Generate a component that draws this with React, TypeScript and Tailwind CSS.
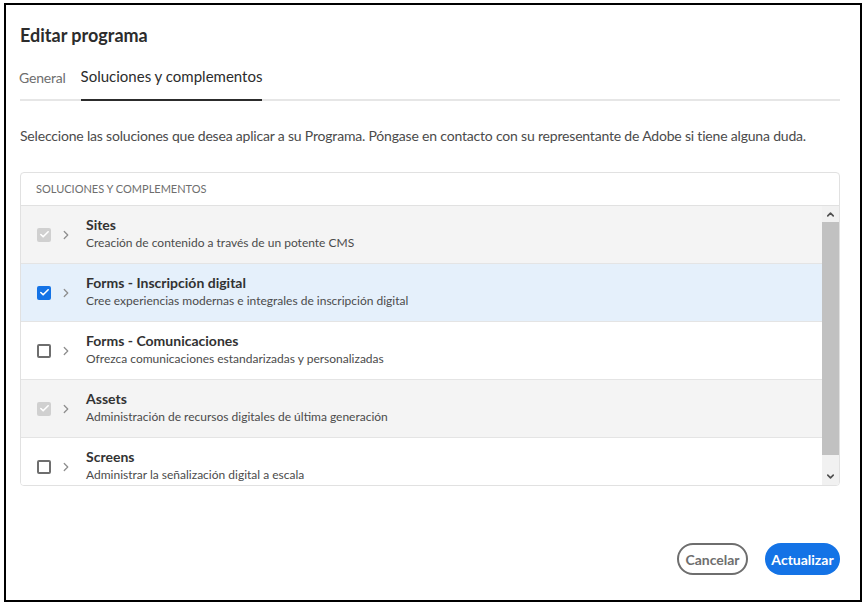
import { Check, ChevronRight, ChevronUp, ChevronDown } from "lucide-react";

type Solution = {
  id: string;
  name: string;
  description: string;
  state: "locked" | "checked" | "unchecked";
};

const solutions: Solution[] = [
  { id: "sites", name: "Sites", description: "Creación de contenido a través de un potente CMS", state: "locked" },
  { id: "forms-enroll", name: "Forms - Inscripción digital", description: "Cree experiencias modernas e integrales de inscripción digital", state: "checked" },
  { id: "forms-comm", name: "Forms - Comunicaciones", description: "Ofrezca comunicaciones estandarizadas y personalizadas", state: "unchecked" },
  { id: "assets", name: "Assets", description: "Administración de recursos digitales de última generación", state: "locked" },
  { id: "screens", name: "Screens", description: "Administrar la señalización digital a escala", state: "unchecked" },
];

function CheckBox({ state }: { state: Solution["state"] }) {
  if (state === "locked") {
    return (
      <span className="flex h-[14px] w-[14px] items-center justify-center rounded-[2px] bg-[#d0d0d0]">
        <Check size={11} strokeWidth={3.5} className="text-white" />
      </span>
    );
  }
  if (state === "checked") {
    return (
      <span className="flex h-[14px] w-[14px] items-center justify-center rounded-[2px] bg-[#1473e6]">
        <Check size={11} strokeWidth={3.5} className="text-white" />
      </span>
    );
  }
  return <span className="h-[14px] w-[14px] rounded-[2px] border-2 border-[#6e6e6e] bg-white" />;
}

function SolutionRow({ item }: { item: Solution }) {
  const bg =
    item.state === "checked" ? "bg-[#e5f0fb]" : item.state === "locked" ? "bg-[#f4f4f4]" : "bg-white";
  return (
    <div className={`flex h-[58px] shrink-0 items-center border-b border-[#e4e4e4] pl-[16px] ${bg}`}>
      <CheckBox state={item.state} />
      <ChevronRight size={14} strokeWidth={2.2} className="ml-[8px] text-[#8e8e8e]" />
      <div className="ml-[13px] -mt-[2px] flex flex-col">
        <span className="text-[14px] font-bold leading-[18px] text-[#323232]">{item.name}</span>
        <span className="text-[12px] leading-[18px] text-[#4b4b4b]">{item.description}</span>
      </div>
    </div>
  );
}

export default function App() {
  return (
    <div className="h-[608px] w-[868px] bg-white pl-[4px] pt-[3px] font-['Lato',sans-serif]">
      <div className="flex h-[599px] w-[858px] flex-col border-2 border-black pl-[14px] pr-[20px]">
        <h2 className="mt-[17px] h-[26px] text-[18px] font-bold leading-[26px] text-[#2c2c2c]">
          Editar programa
        </h2>

        {/* pestañas */}
        <div className="mt-[7px] flex h-[46px] gap-[15px] border-b-2 border-[#e6e6e6]">
          <div className="-ml-[1px] flex h-[44px] items-center text-[14px] tracking-[-0.2px] text-[#6e6e6e]">
            General
          </div>
          <div className="-mb-[2px] flex h-[46px] items-center border-b-2 border-[#2c2c2c] pb-[2px] text-[15px] text-[#2c2c2c]">
            Soluciones y complementos
          </div>
        </div>

        <p className="mt-[25px] text-[14px] leading-[20px] tracking-[-0.19px] text-[#4b4b4b]">
          Seleccione las soluciones que desea aplicar a su Programa. Póngase en contacto con su representante de
          Adobe si tiene alguna duda.
        </p>

        {/* tabla */}
        <div className="mt-[26px] flex h-[314px] flex-col overflow-hidden rounded-[4px] border border-[#e1e1e1]">
          <div className="flex h-[33px] shrink-0 items-center border-b border-[#e1e1e1] pl-[15px] text-[11px] uppercase text-[#6e6e6e]">
            Soluciones y complementos
          </div>
          <div className="flex min-h-0 flex-1">
            <div className="flex min-w-0 flex-1 flex-col overflow-hidden">
              {solutions.map((s) => (
                <SolutionRow key={s.id} item={s} />
              ))}
            </div>
            <div className="flex w-[17px] flex-col bg-[#f1f1f1]">
              <div className="flex h-[16px] items-center justify-center">
                <ChevronUp size={11} strokeWidth={3.5} className="text-[#505050]" />
              </div>
              <div className="h-[233px] bg-[#c1c1c1]" />
              <div className="flex-1" />
              <div className="flex h-[17px] items-center justify-center">
                <ChevronDown size={11} strokeWidth={3.5} className="text-[#505050]" />
              </div>
            </div>
          </div>
        </div>

        <div className="mt-[57px] flex justify-end gap-[17px]">
          <button className="h-[32px] w-[71px] rounded-full border-2 border-[#6e6e6e] text-[14px] font-bold text-[#6e6e6e]">
            Cancelar
          </button>
          <button className="h-[32px] w-[75px] rounded-full bg-[#1473e6] text-[14px] font-bold text-white">
            Actualizar
          </button>
        </div>
      </div>
    </div>
  );
}
